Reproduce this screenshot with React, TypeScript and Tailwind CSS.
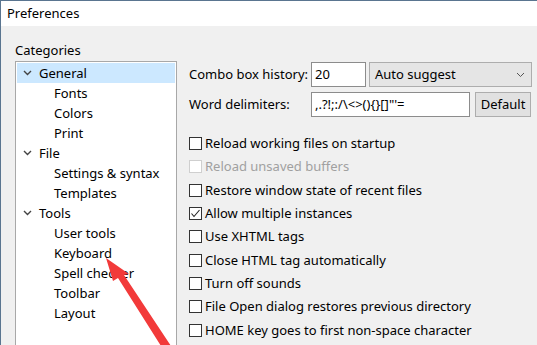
import React from 'react';

const tree: { label: string; level: 0 | 1; selected?: boolean }[] = [
  { label: 'General', level: 0, selected: true },
  { label: 'Fonts', level: 1 },
  { label: 'Colors', level: 1 },
  { label: 'Print', level: 1 },
  { label: 'File', level: 0 },
  { label: 'Settings & syntax', level: 1 },
  { label: 'Templates', level: 1 },
  { label: 'Tools', level: 0 },
  { label: 'User tools', level: 1 },
  { label: 'Keyboard', level: 1 },
  { label: 'Spell checker', level: 1 },
  { label: 'Toolbar', level: 1 },
  { label: 'Layout', level: 1 },
];

const options: { label: string; checked?: boolean; disabled?: boolean }[] = [
  { label: 'Reload working files on startup' },
  { label: 'Reload unsaved buffers', disabled: true },
  { label: 'Restore window state of recent files' },
  { label: 'Allow multiple instances', checked: true },
  { label: 'Use XHTML tags' },
  { label: 'Close HTML tag automatically' },
  { label: 'Turn off sounds' },
  { label: 'File Open dialog restores previous directory' },
  { label: 'HOME key goes to first non-space character' },
];

function Chevron() {
  return (
    <svg width="9" height="6" viewBox="0 0 9 6" className="shrink-0">
      <path d="M1 1 L4.5 4.5 L8 1" fill="none" stroke="#444" strokeWidth="1.4" />
    </svg>
  );
}

function Checkbox({ checked, disabled }: { checked?: boolean; disabled?: boolean }) {
  return (
    <span
      className={`flex h-[13px] w-[13px] shrink-0 items-center justify-center border bg-white ${
        disabled ? 'border-[#cfcfcf]' : 'border-[#333]'
      }`}
    >
      {checked && (
        <svg width="11" height="11" viewBox="0 0 11 11">
          <path d="M1.5 5.5 L4 8.5 L9.5 2" fill="none" stroke="#222" strokeWidth="1.1" />
        </svg>
      )}
    </span>
  );
}

export default function App() {
  return (
    <div
      className="relative h-[345px] w-[537px] overflow-hidden border-l border-t border-[#5a7590] bg-[#f0f0f0] text-[13px] text-black"
      style={{ fontFamily: '"Noto Sans", "Liberation Sans", sans-serif' }}
    >
      <div className="flex h-[25px] items-center bg-white pl-[6px] leading-none">Preferences</div>

      <div className="flex gap-3 pl-[14px] pt-[15px]">
        <div className="flex w-[162px] flex-col">
          <div className="h-[20px] leading-[18px]">Categories</div>
          <div className="h-[300px] border border-[#a8a8a8] bg-white p-px">
            {tree.map((item) => (
              <div
                key={item.label}
                className={`flex h-[20px] items-center leading-none ${item.selected ? 'bg-[#cce8ff]' : ''} ${
                  item.level === 0 ? 'gap-[7px] pl-[6px]' : 'pl-[37px]'
                }`}
              >
                {item.level === 0 && <Chevron />}
                <span>{item.label}</span>
              </div>
            ))}
          </div>
        </div>

        <div className="flex w-[343px] flex-col pt-[21px]">
          <div className="flex h-[25px] items-center">
            <span className="w-[122px] leading-none">Combo box history:</span>
            <div className="flex h-[25px] w-[55px] items-center border border-[#8c8c8c] bg-white pl-[3px] leading-none">
              20
            </div>
            <div className="ml-[3px] flex h-[25px] flex-1 items-center justify-between border border-[#adadad] bg-[#e5e5e5] pl-[5px] pr-[6px] leading-none">
              <span>Auto suggest</span>
              <svg width="9" height="6" viewBox="0 0 9 6">
                <path d="M1 1 L4.5 4.5 L8 1" fill="none" stroke="#555" strokeWidth="1" />
              </svg>
            </div>
          </div>

          <div className="mt-[5px] flex h-[25px] items-center">
            <span className="w-[122px] leading-none">Word delimiters:</span>
            <div className="flex h-[25px] w-[159px] items-center border border-[#8c8c8c] bg-white pl-[3px] leading-none">
              ,.?!;:/\&lt;&gt;(){'{'}{'}'}[]"'=
            </div>
            <div className="ml-[5px] flex h-[25px] w-[56px] items-center justify-center border border-[#adadad] bg-[#e1e1e1] leading-none">
              Default
            </div>
          </div>

          <div className="mt-[15px] flex flex-col">
            {options.map((o) => (
              <div key={o.label} className="flex h-[23.3px] items-center gap-[3px] leading-none">
                <Checkbox checked={o.checked} disabled={o.disabled} />
                <span className={`whitespace-nowrap ${o.disabled ? 'text-[#a0a0a0]' : ''}`}>{o.label}</span>
              </div>
            ))}
          </div>
        </div>
      </div>

      <svg className="pointer-events-none absolute left-0 top-0" width="537" height="345" viewBox="0 0 537 345">
        <path
          d="M105 257 L128 273 L123 274 L168 342 L170 345 L160 345 L117 277 L112 280 Z"
          fill="#f23a3a"
        />
      </svg>
    </div>
  );
}
